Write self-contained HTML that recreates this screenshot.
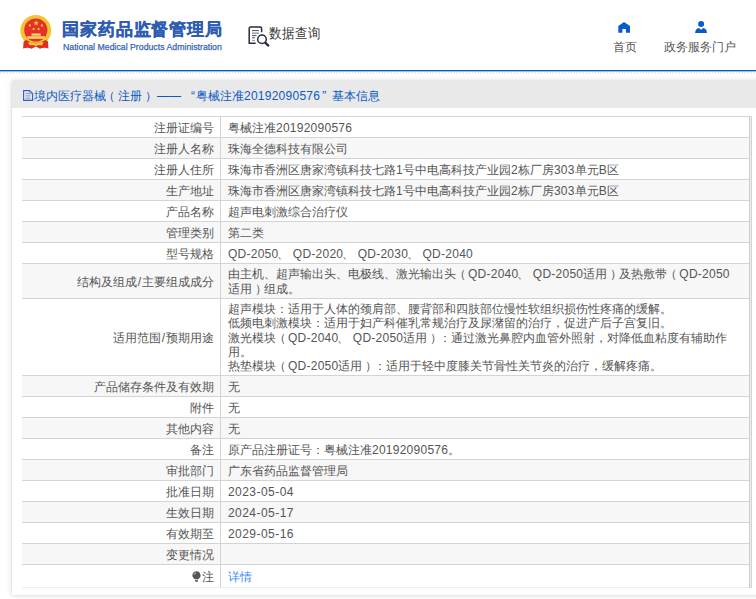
<!DOCTYPE html>
<html><head><meta charset="utf-8">
<style>
*{margin:0;padding:0;box-sizing:border-box}
html,body{width:756px;height:599px;overflow:hidden;background:#fff;font-family:"Liberation Sans",sans-serif;color:#555}
.abs{position:absolute}
#hdr{position:absolute;left:0;top:0;width:756px;height:70px;background:#fff}
#bl{position:absolute;left:0;top:70px;width:756px;height:1px;background:#0a5bbf}
#bl2{position:absolute;left:0;top:71px;width:756px;height:1px;background:#9dbde6}
#dash{position:absolute;left:0;top:71px;width:756px;height:3px}
.t1{position:absolute;left:62px;top:17px;font-size:17.3px;letter-spacing:0.9px;font-weight:bold;color:#2d5cb2;white-space:nowrap;-webkit-text-stroke:0.25px #2d5cb2}
.t2{position:absolute;left:62.8px;top:40.5px;font-size:9.9px;color:#3262b5;white-space:nowrap;transform:scaleX(0.885);transform-origin:0 0;-webkit-text-stroke:0.25px #3262b5}
.sq{position:absolute;left:269px;top:25px;font-size:12.8px;color:#383838;white-space:nowrap;transform:scaleY(1.12);transform-origin:0 0}
.nav{position:absolute;top:39px;font-size:12px;color:#555;white-space:nowrap}
#box{position:absolute;left:12px;top:81px;width:760px;height:514px;background:#fff;box-shadow:0 0 6px rgba(0,0,0,0.16),0 0 1px rgba(0,0,0,0.15)}
#tbar{position:absolute;left:12px;top:81px;width:744px;height:27px;background:#e9e9e9}
.ttl{position:absolute;left:34px;top:88px;font-size:12px;color:#0b5ac4;white-space:nowrap}
#rb1{position:absolute;left:749px;top:116px;width:1px;height:472px;background:#d0d0d0}
#rbm{position:absolute;left:750px;top:116px;width:1px;height:472px;background:#e8eaf2}
#rb2{position:absolute;left:751px;top:116px;width:1px;height:472px;background:#d4d4d4}
a{color:#4287f0;text-decoration:none}
.r{position:absolute;left:22px;width:727px;border-top:1px solid #d4d4d4;font-size:12px;color:#555}
.l{position:absolute;left:0;top:0;bottom:0;width:199px;border-right:1px solid #d4d4d4;display:flex;align-items:center;justify-content:flex-end;padding-right:6px;line-height:14.33px;white-space:nowrap}
.v{position:absolute;left:199px;top:0;bottom:0;right:0;display:flex;align-items:center;padding-left:7px;line-height:14.33px;white-space:nowrap}
.n{letter-spacing:0.25px}
.m{letter-spacing:0.45px}
.sl{margin:0 1px}
.po{position:relative;left:-2.5px}
.pc{position:relative;left:2.5px}
.d{margin-right:2.4px;position:relative;left:-1.5px}
.v>div,.l>div{position:relative;top:0.7px}

</style></head><body>
<div id="hdr"></div>
<svg class="abs" style="left:18px;top:13px" width="36" height="38" viewBox="0 0 36 38">
 <circle cx="17.8" cy="17.4" r="15.4" fill="#f3c332"/>
 <circle cx="17.8" cy="17" r="11.6" fill="#e6312b"/>
 <path d="M8 27 Q17.8 33 27.6 27 L30 28.5 L30.5 35.5 Q26 34 22 35.8 L17.8 33.5 L13.6 35.8 Q9.6 34 5.1 35.5 L5.6 28.5Z" fill="#e22d26"/>
 <path d="M10 29.5 Q13.5 28 17.8 30.5 Q22 28 25.6 29.5 L24 32.5 Q21 31.5 17.8 33 Q14.6 31.5 11.6 32.5Z" fill="#f4c93a"/>
 <polygon points="18.10,7.20 18.81,9.13 20.86,9.20 19.24,10.47 19.80,12.45 18.10,11.30 16.40,12.45 16.96,10.47 15.34,9.20 17.39,9.13" fill="#f7d33a"/>
 <circle cx="11.8" cy="12.4" r="1.1" fill="#f7d33a"/><circle cx="23.9" cy="12.4" r="1.1" fill="#f7d33a"/>
 <circle cx="15.6" cy="16" r="1.1" fill="#f7d33a"/><circle cx="20.6" cy="16" r="1.1" fill="#f7d33a"/>
 <rect x="13.5" y="20.5" width="9.2" height="2.2" fill="#f7d87a"/>
 <rect x="9.3" y="23.2" width="17.5" height="2.6" fill="#f7d560"/>
</svg>
<div class="t1">国家药品监督管理局</div>
<div class="t2">National Medical Products Administration</div>
<svg class="abs" style="left:244px;top:22.5px" width="30" height="26" viewBox="0 0 30 26">
 <path d="M11.7 20.3 H5.2 V5.5 Q5.2 4.1 6.6 4.1 H16.2 Q17.6 4.1 17.6 5.5 V9.3" fill="none" stroke="#2b2b3b" stroke-width="1.5"/>
 <path d="M8 7.6 H15 M8 12.6 H12.5 M8 14.8 H11" stroke="#3a3a48" stroke-width="0.9"/>
 <path d="M8 10.2 H15" stroke="#9a9aa2" stroke-width="1.5"/>
 <path d="M8 17.4 H11" stroke="#8a8a92" stroke-width="0.9"/>
 <circle cx="18" cy="16.3" r="4.3" fill="#fff" stroke="#2b2b3b" stroke-width="1.5"/>
 <path d="M21.2 19.6 L24.3 22.6" stroke="#2b2b3b" stroke-width="2.2" stroke-linecap="round"/>
</svg>
<div class="sq">数据查询</div>
<svg class="abs" style="left:618px;top:22px" width="13" height="11" viewBox="0 0 13 11">
 <path d="M0.3 4 L6 0 L12 4 V10.7 H7.9 V7 H4.4 V10.7 H0.3Z" fill="#0a5bc4"/>
</svg>
<div class="nav" style="left:613px">首页</div>
<svg class="abs" style="left:695px;top:21px" width="12" height="12" viewBox="0 0 12 12">
 <circle cx="6.1" cy="3.1" r="3" fill="#0a5bc4"/>
 <path d="M0.1 12 Q0.4 7.4 4 6.9 L6.1 8.7 L8.2 6.9 Q11.7 7.4 12 12Z" fill="#0a5bc4"/>
</svg>
<div class="nav" style="left:664px">政务服务门户</div>
<div id="bl"></div><div id="bl2"></div><svg id="dash" width="756" height="3"><defs><pattern id="pd" width="3" height="3" patternUnits="userSpaceOnUse"><path d="M0.3 2.7 L2.2 0.8" stroke="#d6d6d6" stroke-width="0.9"/></pattern></defs><rect width="756" height="3" fill="url(#pd)"/></svg>

<div id="box"></div>
<div id="tbar"></div>
<svg class="abs" style="left:23px;top:90px" width="11" height="12" viewBox="0 0 11 12">
 <path d="M0.6 0.6 H6.6 L9.6 3.6 V10.4 H0.6Z" fill="none" stroke="#2a62c4" stroke-width="1.1"/>
 <path d="M6.4 0.8 V3.8 H9.4" fill="none" stroke="#6a90d8" stroke-width="0.8"/>
 <path d="M2.6 3.6 H6 M2.6 5.9 H7.6 M2.6 8.2 H7.6" stroke="#5a84d0" stroke-width="0.8"/>
</svg>
<div class="ttl">境内医疗器械<span style="position:relative;left:-3px">（</span>注册<span style="position:relative;left:3px">）</span><span style="margin-left:3px">——</span><span style="margin-left:10px">“</span><span style="margin-left:1px">粤械注准</span><span class="n">20192090576</span><span style="margin-left:2px">”</span><span style="margin-left:6px">基本信息</span></div>

<div class="r" style="top:116px;height:21px;background:#fff"><div class="l"><div>注册证编号</div></div><div class="v"><div>粤械注准<span class="n">20192090576</span></div></div></div>
<div class="r" style="top:137px;height:21px;background:#f7f7f7"><div class="l"><div>注册人名称</div></div><div class="v"><div>珠海全德科技有限公司</div></div></div>
<div class="r" style="top:158px;height:21px;background:#fff"><div class="l"><div>注册人住所</div></div><div class="v"><div>珠海市香洲区唐家湾镇科技七路<span class="n">1</span>号中电高科技产业园<span class="n">2</span>栋厂房<span class="n">303</span>单元<span class="n">B</span>区</div></div></div>
<div class="r" style="top:179px;height:21px;background:#f7f7f7"><div class="l"><div>生产地址</div></div><div class="v"><div>珠海市香洲区唐家湾镇科技七路<span class="n">1</span>号中电高科技产业园<span class="n">2</span>栋厂房<span class="n">303</span>单元<span class="n">B</span>区</div></div></div>
<div class="r" style="top:200px;height:21px;background:#fff"><div class="l"><div>产品名称</div></div><div class="v"><div>超声电刺激综合治疗仪</div></div></div>
<div class="r" style="top:221px;height:21px;background:#f7f7f7"><div class="l"><div>管理类别</div></div><div class="v"><div>第二类</div></div></div>
<div class="r" style="top:242px;height:21px;background:#fff"><div class="l"><div>型号规格</div></div><div class="v"><div><span class="n">QD-2050</span><span class="d">、</span><span class="n">QD-2020</span><span class="d">、</span><span class="n">QD-2030</span><span class="d">、</span><span class="n">QD-2040</span></div></div></div>
<div class="r" style="top:263px;height:35px;background:#f7f7f7"><div class="l"><div>结构及组成<span class="sl">/</span>主要组成成分</div></div><div class="v"><div>由主机、超声输出头、电极线、激光输出头<span class="po">（</span><span class="n">QD-2040</span><span class="d">、</span><span class="n">QD-2050</span>适用<span class="pc">）</span>及热敷带<span class="po">（</span><span class="n">QD-2050</span><br>适用<span class="pc">）</span>组成。</div></div></div>
<div class="r" style="top:298px;height:77px;background:#fff"><div class="l"><div>适用范围<span class="sl">/</span>预期用途</div></div><div class="v"><div>超声模块：适用于人体的颈肩部、腰背部和四肢部位慢性软组织损伤性疼痛的缓解。<br>低频电刺激模块：适用于妇产科催乳常规治疗及尿潴留的治疗，促进产后子宫复旧。<br>激光模块<span class="po">（</span><span class="n">QD-2040</span><span class="d">、</span><span class="n">QD-2050</span>适用<span class="pc">）</span>：通过激光鼻腔内血管外照射，对降低血粘度有辅助作<br>用。<br>热垫模块<span class="po">（</span><span class="n">QD-2050</span>适用<span class="pc">）</span>：适用于轻中度膝关节骨性关节炎的治疗，缓解疼痛。</div></div></div>
<div class="r" style="top:375px;height:21px;background:#f7f7f7"><div class="l"><div>产品储存条件及有效期</div></div><div class="v"><div>无</div></div></div>
<div class="r" style="top:396px;height:21px;background:#fff"><div class="l"><div>附件</div></div><div class="v"><div>无</div></div></div>
<div class="r" style="top:417px;height:21px;background:#f7f7f7"><div class="l"><div>其他内容</div></div><div class="v"><div>无</div></div></div>
<div class="r" style="top:438px;height:21px;background:#fff"><div class="l"><div>备注</div></div><div class="v"><div>原产品注册证号：粤械注准<span class="n">20192090576</span>。</div></div></div>
<div class="r" style="top:459px;height:21px;background:#f7f7f7"><div class="l"><div>审批部门</div></div><div class="v"><div>广东省药品监督管理局</div></div></div>
<div class="r" style="top:480px;height:21px;background:#fff"><div class="l"><div>批准日期</div></div><div class="v"><div><span class="m">2023-05-04</span></div></div></div>
<div class="r" style="top:501px;height:21px;background:#f7f7f7"><div class="l"><div>生效日期</div></div><div class="v"><div><span class="m">2024-05-17</span></div></div></div>
<div class="r" style="top:522px;height:21px;background:#fff"><div class="l"><div>有效期至</div></div><div class="v"><div><span class="m">2029-05-16</span></div></div></div>
<div class="r" style="top:543px;height:21px;background:#f7f7f7"><div class="l"><div>变更情况</div></div><div class="v"><div></div></div></div>
<div class="r" style="top:564px;height:23px;background:#fff"><div class="l"><div><svg width="9" height="11" viewBox="0 0 9 11" style="vertical-align:-1px;margin-right:1px"><path d="M4.5 0.3 C7 0.3 8.6 2.2 8.6 4.4 C8.6 6.3 7.2 7.2 6.2 8.3 L2.8 8.3 C1.8 7.2 0.4 6.3 0.4 4.4 C0.4 2.2 2 0.3 4.5 0.3Z" fill="#555"/><path d="M3 9.4 H6 M3.3 10.5 H5.7" stroke="#555" stroke-width="0.9"/><path d="M2.2 3.6 Q2.6 1.9 4.2 1.6" stroke="#ddd" stroke-width="0.9" fill="none"/></svg>注</div></div><div class="v"><div><a>详情</a></div></div></div>
<div id="bb" style="position:absolute;left:22px;top:587px;width:727px;height:1px;background:#eceef5"></div><div id="rb1"></div><div id="rbm"></div><div id="rb2"></div>
</body></html>
